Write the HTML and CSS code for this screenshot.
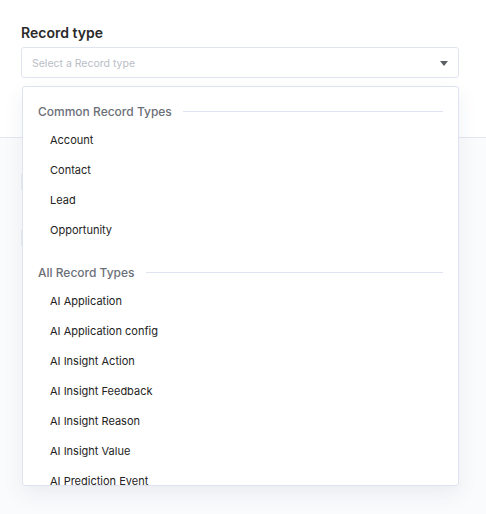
FILE: index.html
```html
<!DOCTYPE html>
<html lang="en">
<head>
    <meta charset="UTF-8">
    <meta name="viewport" content="width=device-width, initial-scale=1.0">
    <title>Record type</title>
    <link rel="stylesheet" href="styles.css">
</head>
<body>
    <div class="page">
        <!-- record type field -->
        <div class="field">
            <label class="field-label">Record type</label>
            <div class="select">
                <span class="placeholder">Select a Record type</span>
                <span class="caret"></span>
            </div>

            <!-- open dropdown menu -->
            <div class="menu">
                <div class="group-title"><span>Common Record Types</span></div>
                <div class="option">Account</div>
                <div class="option">Contact</div>
                <div class="option">Lead</div>
                <div class="option">Opportunity</div>

                <div class="group-title"><span>All Record Types</span></div>
                <div class="option">AI Application</div>
                <div class="option">AI Application config</div>
                <div class="option">AI Insight Action</div>
                <div class="option">AI Insight Feedback</div>
                <div class="option">AI Insight Reason</div>
                <div class="option">AI Insight Value</div>
                <div class="option">AI Prediction Event</div>
            </div>
        </div>

        <!-- section behind the menu -->
        <div class="section">
            <div class="row"></div>
            <div class="row"></div>
        </div>
    </div>
</body>
</html>
```

FILE: styles.css
```css
* {
    margin: 0;
    padding: 0;
    box-sizing: border-box;
    font-family: 'Inter', 'Liberation Sans', sans-serif;
}

body {
    width: 486px;
    height: 514px;
    overflow: hidden;
    background: #fafbfc;
    color: #222;
}

.page {
    height: 100%;
    display: flex;
    flex-direction: column;
}

.field {
    position: relative;
    background: #fff;
    padding: 24px 27px 0 21px;
    height: 138px;
    border-bottom: 1px solid #e3e7f0;
}

.field-label {
    display: block;
    font-size: 14px;
    font-weight: 600;
    color: #2a2a2a;
    line-height: 17px;
    margin-bottom: 6px;
}

.select {
    height: 31px;
    border: 1px solid #dfe4ee;
    border-radius: 3px;
    display: flex;
    align-items: center;
    justify-content: space-between;
    padding: 1px 10px 0 10px;
}

.placeholder {
    font-size: 10.5px;
    color: #b9bdc6;
}

.caret {
    width: 0;
    height: 0;
    border-left: 4px solid transparent;
    border-right: 4px solid transparent;
    border-top: 5px solid #5c5f66;
    margin-top: 1px;
}

.menu {
    position: absolute;
    top: 86px;
    left: 22px;
    width: 437px;
    height: 400px;
    overflow: hidden;
    background: #fff;
    border: 1px solid #dde3f1;
    border-radius: 3px;
    box-shadow: 0 8px 20px rgba(40, 60, 110, 0.08);
    padding: 15px 15px 0 15px;
    z-index: 2;
}

.group-title {
    display: flex;
    align-items: center;
    gap: 11px;
    height: 18px;
    margin-bottom: 5px;
    font-size: 12px;
    font-weight: 500;
    color: #6b6f78;
}

.group-title::after {
    content: "";
    flex: 1;
    height: 1px;
    background: #dfe3f2;
}

.option + .group-title {
    margin-top: 18px;
}

.option {
    height: 30px;
    line-height: 30px;
    padding-left: 12px;
    font-size: 11px;
    color: #232323;
}

.section {
    flex: 1;
    padding: 36px 28px 0 21px;
    display: flex;
    flex-direction: column;
    gap: 40px;
}

.row {
    height: 16px;
    border-left: 1px solid #e9ecf2;
    border-right: 1px solid #e6e9f0;
}
```
